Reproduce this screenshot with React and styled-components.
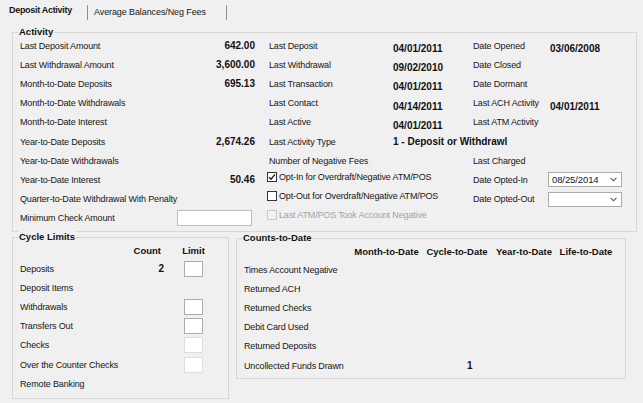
import React from "react";
import styled, { createGlobalStyle } from "styled-components";

const GlobalStyle = createGlobalStyle`
  html, body {
    margin: 0;
    padding: 0;
    background: #f0f0f0;
  }
  body {
    font-family: "Liberation Sans", Arial, sans-serif;
    color: #161616;
  }
`;

const Screen = styled.div`
  width: 643px;
  height: 403px;
  overflow: hidden;
  background: #f0f0f0;
  font-size: 9px;
  letter-spacing: -0.15px;
`;

const TabStrip = styled.div`
  display: flex;
  height: 20px;
`;

const ActiveTab = styled.div`
  box-sizing: border-box;
  width: 87px;
  padding-left: 9px;
  line-height: 20px;
  font-weight: bold;
  letter-spacing: -0.3px;
`;

const InactiveTab = styled.div`
  box-sizing: border-box;
  width: 140px;
  height: 15px;
  margin-top: 5px;
  padding-left: 6px;
  line-height: 15px;
  border-left: 1px solid #8e8e8e;
  border-right: 1px solid #8e8e8e;
  letter-spacing: -0.1px;
`;

const Group = styled.div`
  box-sizing: border-box;
  flex: none;
  width: ${(p) => p.$w}px;
  height: ${(p) => p.$h}px;
  border: 1px solid #d7d7d7;
`;

const ActivityGroup = styled(Group)`
  margin: 12px 0 0 12px;
`;

const GroupTitle = styled.div`
  width: fit-content;
  height: 12px;
  margin: -7px 0 0 5px;
  padding: 0 1px;
  line-height: 12px;
  background: #f0f0f0;
  font-weight: bold;
  font-size: 9.5px;
  letter-spacing: 0;
  color: #111;
`;

const ActivityGrid = styled.div`
  display: grid;
  grid-template-columns: 235px 194px 1fr;
  grid-auto-rows: 19.2px;
  column-gap: 12px;
  margin-top: -2px;
  padding-left: 7px;
`;

const LeftCell = styled.div`
  display: flex;
  align-items: center;
  justify-content: space-between;
  white-space: nowrap;
`;

const SplitCell = styled.div`
  display: grid;
  grid-template-columns: ${(p) => p.$label}px 1fr;
  align-items: center;
  white-space: nowrap;
`;

const Label = styled.span`
  padding-left: ${(p) => p.$pad || 0}px;
`;

const Amount = styled.span`
  font-weight: bold;
  font-size: 10px;
  letter-spacing: 0;
  color: #111;
`;

const DateValue = styled(Amount)`
  margin-top: ${(p) => (p.$low ? 6 : 0)}px;
`;

const TextBox = styled.div`
  box-sizing: border-box;
  width: 75px;
  height: 16px;
  margin-right: 3px;
  background: #fff;
  border: 1px solid #bcbcbc;
`;

const CheckRow = styled.div`
  display: flex;
  align-items: center;
  gap: 2px;
  margin-top: -6px;
  white-space: nowrap;
  color: ${(p) => (p.$disabled ? "#a3a3a3" : "inherit")};
`;

const Box = styled.span`
  box-sizing: border-box;
  display: inline-flex;
  align-items: center;
  justify-content: center;
  width: 10px;
  height: 10px;
  background: ${(p) => (p.$disabled ? "#f2f2f2" : "#fff")};
  border: 1px solid ${(p) => (p.$disabled ? "#c9c9c9" : "#333")};
`;

const Combo = styled.div`
  box-sizing: border-box;
  display: flex;
  align-items: center;
  justify-content: space-between;
  width: 74px;
  height: 15px;
  margin-left: -2px;
  padding: 0 4px 0 3px;
  background: #fff;
  border: 1px solid #acacac;
  font-size: 9.5px;
  letter-spacing: -0.1px;
`;

const LowerRow = styled.div`
  display: flex;
  align-items: flex-start;
  gap: 7px;
  margin: 5px 0 0 12px;
`;

const CountsGroup = styled(Group)`
  margin-top: 1px;
`;

const Table = styled.div`
  padding-left: 7px;
`;

const TableRow = styled.div`
  display: grid;
  grid-template-columns: ${(p) => p.$cols};
  column-gap: ${(p) => p.$gap || 0}px;
  align-items: center;
  height: ${(p) => p.$h || 19.2}px;
  margin-bottom: ${(p) => (p.$head ? 2 : 0)}px;
  white-space: nowrap;
`;

const Head = styled.span`
  font-weight: bold;
  font-size: 9.5px;
  letter-spacing: 0;
  color: #111;
  justify-self: ${(p) => p.$align || "center"};
  padding-right: ${(p) => p.$pr || 0}px;
`;

const Count = styled.span`
  justify-self: end;
  padding-right: ${(p) => p.$pr || 0}px;
  font-weight: bold;
  font-size: 10px;
  letter-spacing: 0;
  color: #111;
`;

const LimitBox = styled.div`
  box-sizing: border-box;
  width: 19px;
  height: 16px;
  background: #fff;
  border: 1px solid ${(p) => (p.$disabled ? "#dedede" : "#acacac")};
`;

const Check = () => (
  <svg width="8" height="8" viewBox="0 0 8 8">
    <path d="M1 4.2 L3 6.3 L7 1.4" fill="none" stroke="#222" strokeWidth="1.4" />
  </svg>
);

const Chevron = () => (
  <svg width="7" height="5" viewBox="0 0 7 5">
    <path d="M0.6 0.8 L3.5 3.8 L6.4 0.8" fill="none" stroke="#555" strokeWidth="1.1" />
  </svg>
);

const leftRows = [
  ["Last Deposit Amount", "642.00"],
  ["Last Withdrawal Amount", "3,600.00"],
  ["Month-to-Date Deposits", "695.13"],
  ["Month-to-Date Withdrawals", ""],
  ["Month-to-Date Interest", ""],
  ["Year-to-Date Deposits", "2,674.26"],
  ["Year-to-Date Withdrawals", ""],
  ["Year-to-Date Interest", "50.46"],
  ["Quarter-to-Date Withdrawal With Penalty", ""],
];

const midRows = [
  ["Last Deposit", "04/01/2011"],
  ["Last Withdrawal", "09/02/2010"],
  ["Last Transaction", "04/01/2011"],
  ["Last Contact", "04/14/2011"],
  ["Last Active", "04/01/2011"],
];

const rightRows = [
  ["Date Opened", "03/06/2008"],
  ["Date Closed", ""],
  ["Date Dormant", ""],
  ["Last ACH Activity", "04/01/2011"],
  ["Last ATM Activity", ""],
];

const cycleRows = [
  { label: "Deposits", count: "2", box: "on" },
  { label: "Deposit Items" },
  { label: "Withdrawals", box: "on" },
  { label: "Transfers Out", box: "on" },
  { label: "Checks", box: "off" },
  { label: "Over the Counter Checks", box: "off" },
  { label: "Remote Banking" },
];

const countRows = [
  ["Times Account Negative", ""],
  ["Returned ACH", ""],
  ["Returned Checks", ""],
  ["Debit Card Used", ""],
  ["Returned Deposits", ""],
  ["Uncollected Funds Drawn", "1"],
];

const CYCLE_COLS = "111px 33px 20px 19px";
const COUNT_COLS = "103.5px 65px 63px 58px 53px";

function Activity() {
  const cells = [];
  for (let i = 0; i < 10; i++) {
    // left column
    if (i < 9) {
      cells.push(
        <LeftCell key={`l${i}`}>
          <Label>{leftRows[i][0]}</Label>
          <Amount>{leftRows[i][1]}</Amount>
        </LeftCell>
      );
    } else {
      cells.push(
        <LeftCell key="l9">
          <Label>Minimum Check Amount</Label>
          <TextBox />
        </LeftCell>
      );
    }

    // middle column
    if (i < 5) {
      cells.push(
        <SplitCell key={`m${i}`} $label={126}>
          <Label $pad={2}>{midRows[i][0]}</Label>
          <DateValue $low>{midRows[i][1]}</DateValue>
        </SplitCell>
      );
    } else if (i === 5) {
      cells.push(
        <SplitCell key="m5" $label={126}>
          <Label $pad={2}>Last Activity Type</Label>
          <Amount>1 - Deposit or Withdrawl</Amount>
        </SplitCell>
      );
    } else if (i === 6) {
      cells.push(
        <SplitCell key="m6" $label={126}>
          <Label $pad={2}>Number of Negative Fees</Label>
        </SplitCell>
      );
    } else if (i === 7) {
      cells.push(
        <CheckRow key="m7">
          <Box><Check /></Box>
          Opt-In for Overdraft/Negative ATM/POS
        </CheckRow>
      );
    } else if (i === 8) {
      cells.push(
        <CheckRow key="m8">
          <Box />
          Opt-Out for Overdraft/Negative ATM/POS
        </CheckRow>
      );
    } else {
      cells.push(
        <CheckRow key="m9" $disabled>
          <Box $disabled />
          Last ATM/POS Took Account Negative
        </CheckRow>
      );
    }

    // right column
    if (i < 5) {
      cells.push(
        <SplitCell key={`r${i}`} $label={77}>
          <Label>{rightRows[i][0]}</Label>
          <DateValue $low>{rightRows[i][1]}</DateValue>
        </SplitCell>
      );
    } else if (i === 6) {
      cells.push(
        <SplitCell key="r6" $label={77}>
          <Label>Last Charged</Label>
        </SplitCell>
      );
    } else if (i === 7) {
      cells.push(
        <SplitCell key="r7" $label={77}>
          <Label>Date Opted-In</Label>
          <Combo>
            <span>08/25/2014</span>
            <Chevron />
          </Combo>
        </SplitCell>
      );
    } else if (i === 8) {
      cells.push(
        <SplitCell key="r8" $label={77}>
          <Label>Date Opted-Out</Label>
          <Combo>
            <span />
            <Chevron />
          </Combo>
        </SplitCell>
      );
    } else {
      cells.push(<div key={`r${i}`} />);
    }
  }

  return (
    <ActivityGroup $w={625} $h={200}>
      <GroupTitle>Activity</GroupTitle>
      <ActivityGrid>{cells}</ActivityGrid>
    </ActivityGroup>
  );
}

function CycleLimits() {
  return (
    <Group $w={217} $h={162}>
      <GroupTitle>Cycle Limits</GroupTitle>
      <Table>
        <TableRow $cols={CYCLE_COLS} $h={14} $head>
          <span />
          <Head $align="end" $pr={3}>Count</Head>
          <span />
          <Head>Limit</Head>
        </TableRow>
        {cycleRows.map((r) => (
          <TableRow key={r.label} $cols={CYCLE_COLS}>
            <Label>{r.label}</Label>
            <Count>{r.count}</Count>
            <span />
            {r.box ? <LimitBox $disabled={r.box === "off"} /> : <span />}
          </TableRow>
        ))}
      </Table>
    </Group>
  );
}

function CountsToDate() {
  return (
    <CountsGroup $w={390} $h={141}>
      <GroupTitle>Counts-to-Date</GroupTitle>
      <Table>
        <TableRow $cols={COUNT_COLS} $gap={6.5} $h={14} $head>
          <span />
          <Head>Month-to-Date</Head>
          <Head>Cycle-to-Date</Head>
          <Head>Year-to-Date</Head>
          <Head>Life-to-Date</Head>
        </TableRow>
        {countRows.map(([label, cycle]) => (
          <TableRow key={label} $cols={COUNT_COLS} $gap={6.5}>
            <Label>{label}</Label>
            <span />
            <Count $pr={16}>{cycle}</Count>
            <span />
            <span />
          </TableRow>
        ))}
      </Table>
    </CountsGroup>
  );
}

export default function App() {
  return (
    <Screen>
      <GlobalStyle />
      <TabStrip>
        <ActiveTab>Deposit Activity</ActiveTab>
        <InactiveTab>Average Balances/Neg Fees</InactiveTab>
      </TabStrip>
      <Activity />
      <LowerRow>
        <CycleLimits />
        <CountsToDate />
      </LowerRow>
    </Screen>
  );
}
